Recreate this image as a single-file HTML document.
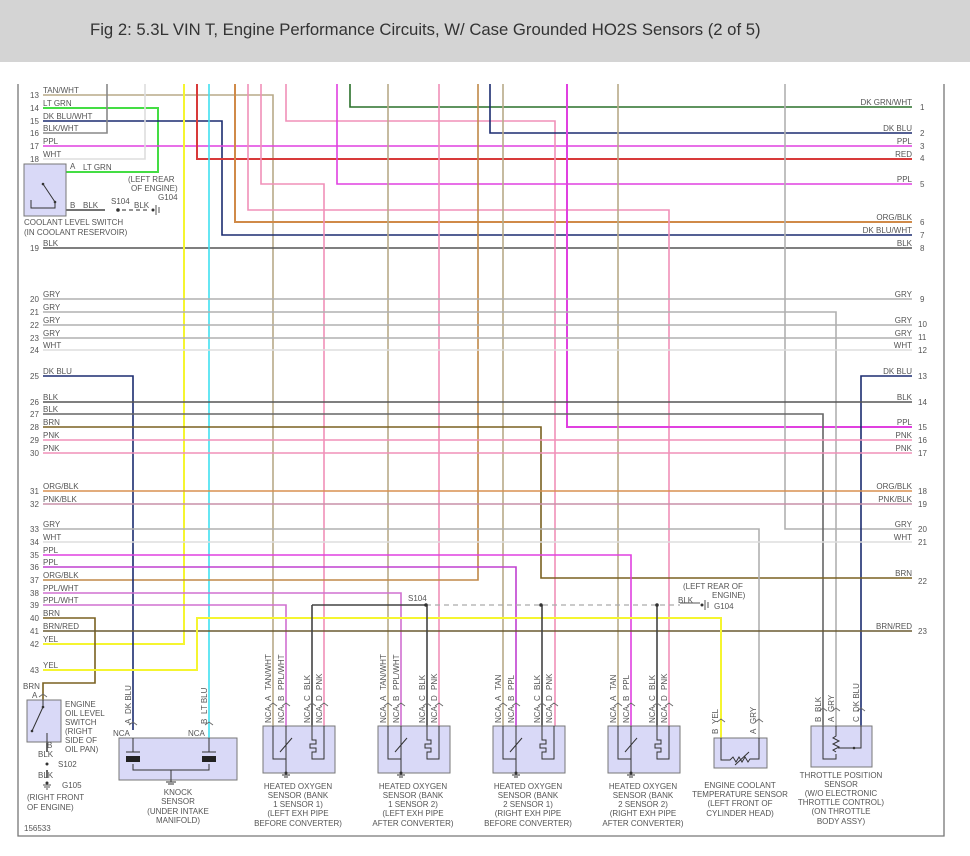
<!DOCTYPE html>
<html><head><meta charset="utf-8"><style>
html,body{margin:0;padding:0;background:#fff;width:970px;height:856px;overflow:hidden}
.hd{position:absolute;left:0;top:0;width:970px;height:62px;background:#d4d4d4}
.hd span{position:absolute;left:90px;top:20px;font:16.7px "Liberation Sans",sans-serif;color:#333}
svg{position:absolute;left:0;top:0}
text{font-family:"Liberation Sans",sans-serif;font-size:8px;fill:#555}
</style></head><body>
<div class="hd"><span>Fig 2: 5.3L VIN T, Engine Performance Circuits, W/ Case Grounded HO2S Sensors (2 of 5)</span></div>
<svg width="970" height="856" viewBox="0 0 970 856" fill="none">
<path d="M18 84V836H944V84" stroke="#777" stroke-width="1.3"/>
<g stroke-width="1.6" fill="none">
<path d="M43 95H273V726" stroke="#b8aa88"/>
<path d="M43 108H158V172H66" stroke="#44dd44" stroke-width="2"/>
<path d="M43 121H222V235H912" stroke="#1c2c70"/>
<path d="M43 133H107V84" stroke="#888"/>
<path d="M43 146H912" stroke="#e040e0"/>
<path d="M43 159H145V84" stroke="#ddd"/>
<path d="M43 248H912" stroke="#555"/>
<path d="M197 84V159H912" stroke="#d83a3a" stroke-width="2"/>
<path d="M184 84V644H43" stroke="#f5f530" stroke-width="2"/>
<path d="M209 84V738" stroke="#40e0f0"/>
<path d="M235 84V222H912" stroke="#d08a48" stroke-width="2"/>
<path d="M248 84V210H669V726" stroke="#f090b8"/>
<path d="M261 84V184H324V726" stroke="#f090b8"/>
<path d="M286 84V121H555V726" stroke="#f090b8"/>
<path d="M337 84V184H912" stroke="#e040e0"/>
<path d="M350 84V107H912" stroke="#2a702a"/>
<path d="M388 84V726" stroke="#b8aa88"/>
<path d="M439 84V726" stroke="#f090b8"/>
<path d="M478 84V580H43" stroke="#c08848"/>
<path d="M490 84V133H912" stroke="#1c2c70"/>
<path d="M503 84V726" stroke="#b8aa88"/>
<path d="M567 84V427H912" stroke="#e040e0" stroke-width="2"/>
<path d="M618 84V726" stroke="#b8aa88"/>
<path d="M785 84V529H912" stroke="#b0b0b0"/>
<path d="M43 299H912" stroke="#b0b0b0"/>
<path d="M43 312H836V726" stroke="#b0b0b0"/>
<path d="M43 325H912M43 338H912" stroke="#b0b0b0"/>
<path d="M43 350H912" stroke="#ddd"/>
<path d="M43 376H133V730" stroke="#1c2c70"/>
<path d="M912 376H861V726" stroke="#1c2c70"/>
<path d="M43 402H912" stroke="#555"/>
<path d="M43 414H823V726" stroke="#666"/>
<path d="M43 427H541V578H912" stroke="#7a6020"/>
<path d="M43 440H912M43 453H912" stroke="#f090b8"/>
<path d="M43 491H912" stroke="#d89050"/>
<path d="M43 504H912" stroke="#c890a8"/>
<path d="M43 529H759V738" stroke="#b0b0b0"/>
<path d="M43 542H912" stroke="#ddd"/>
<path d="M43 555H631V726" stroke="#e040e0"/>
<path d="M43 567H516V726" stroke="#c040d0"/>
<path d="M43 593H401V726" stroke="#d070d0"/>
<path d="M43 605H286V726" stroke="#d070d0"/>
<path d="M43 618H95V683H43V700" stroke="#7a6020"/>
<path d="M43 631H912" stroke="#6a5a30"/>
<path d="M43 670H197V618H721V738" stroke="#f5f530" stroke-width="2"/>
<path d="M312 605H426M312 605V726M427 605V726M542 605V726M657 605V726" stroke="#444"/>
<path d="M66 210H105" stroke="#444"/>
<path d="M47 742V752M47 770V778" stroke="#444"/>
</g>
<path d="M426 605H680" stroke="#aaa" stroke-width="1.2" stroke-dasharray="5,4"/>
<path d="M122 210H150" stroke="#555" stroke-width="1.2" stroke-dasharray="4,3"/>
<path d="M680 603H700" stroke="#555"/>
<g fill="#333"><circle cx="426" cy="605" r="1.8"/><circle cx="541" cy="605" r="1.8"/><circle cx="657" cy="605" r="1.8"/><circle cx="118" cy="210" r="1.8"/><circle cx="153" cy="210" r="1.5"/><circle cx="702" cy="605" r="1.5"/><circle cx="47" cy="764" r="1.5"/><circle cx="47" cy="783" r="1.5"/></g>
<path d="M156 205v10M159 207v6M705 600v10M708 602v6M43 785h8M44 787h6M46 789h2" stroke="#555"/>
<!-- chevrons -->
<g stroke="#666" stroke-width="0.9">
<path d="M269 706l4-3l4 3M282 706l4-3l4 3M308 706l4-3l4 3M320 706l4-3l4 3"/>
<path d="M384 706l4-3l4 3M397 706l4-3l4 3M423 706l4-3l4 3M435 706l4-3l4 3"/>
<path d="M499 706l4-3l4 3M512 706l4-3l4 3M538 706l4-3l4 3M550 706l4-3l4 3"/>
<path d="M614 706l4-3l4 3M627 706l4-3l4 3M653 706l4-3l4 3M665 706l4-3l4 3"/>
<path d="M129 725l4-3l4 3M205 725l4-3l4 3M717 722l4-3l4 3M755 722l4-3l4 3M819 711l4-3l4 3M832 711l4-3l4 3M857 711l4-3l4 3M39 697l4-3l4 3"/>
</g>

<g>
<text x="30" y="98">13</text><text x="43" y="93">TAN/WHT</text>
<text x="30" y="111">14</text><text x="43" y="106">LT GRN</text>
<text x="30" y="124">15</text><text x="43" y="119">DK BLU/WHT</text>
<text x="30" y="136">16</text><text x="43" y="131">BLK/WHT</text>
<text x="30" y="149">17</text><text x="43" y="144">PPL</text>
<text x="30" y="162">18</text><text x="43" y="157">WHT</text>
<text x="30" y="251">19</text><text x="43" y="246">BLK</text>
<text x="30" y="302">20</text><text x="43" y="297">GRY</text>
<text x="30" y="315">21</text><text x="43" y="310">GRY</text>
<text x="30" y="328">22</text><text x="43" y="323">GRY</text>
<text x="30" y="341">23</text><text x="43" y="336">GRY</text>
<text x="30" y="353">24</text><text x="43" y="348">WHT</text>
<text x="30" y="379">25</text><text x="43" y="374">DK BLU</text>
<text x="30" y="405">26</text><text x="43" y="400">BLK</text>
<text x="30" y="417">27</text><text x="43" y="412">BLK</text>
<text x="30" y="430">28</text><text x="43" y="425">BRN</text>
<text x="30" y="443">29</text><text x="43" y="438">PNK</text>
<text x="30" y="456">30</text><text x="43" y="451">PNK</text>
<text x="30" y="494">31</text><text x="43" y="489">ORG/BLK</text>
<text x="30" y="507">32</text><text x="43" y="502">PNK/BLK</text>
<text x="30" y="532">33</text><text x="43" y="527">GRY</text>
<text x="30" y="545">34</text><text x="43" y="540">WHT</text>
<text x="30" y="558">35</text><text x="43" y="553">PPL</text>
<text x="30" y="570">36</text><text x="43" y="565">PPL</text>
<text x="30" y="583">37</text><text x="43" y="578">ORG/BLK</text>
<text x="30" y="596">38</text><text x="43" y="591">PPL/WHT</text>
<text x="30" y="608">39</text><text x="43" y="603">PPL/WHT</text>
<text x="30" y="621">40</text><text x="43" y="616">BRN</text>
<text x="30" y="634">41</text><text x="43" y="629">BRN/RED</text>
<text x="30" y="647">42</text><text x="43" y="642">YEL</text>
<text x="30" y="673">43</text><text x="43" y="668">YEL</text>
</g>
<g text-anchor="end">
<text x="912" y="105">DK GRN/WHT</text><text x="912" y="131">DK BLU</text><text x="912" y="144">PPL</text><text x="912" y="157">RED</text><text x="912" y="182">PPL</text><text x="912" y="220">ORG/BLK</text><text x="912" y="233">DK BLU/WHT</text><text x="912" y="246">BLK</text>
<text x="912" y="297">GRY</text><text x="912" y="323">GRY</text><text x="912" y="336">GRY</text><text x="912" y="348">WHT</text><text x="912" y="374">DK BLU</text><text x="912" y="400">BLK</text><text x="912" y="425">PPL</text><text x="912" y="438">PNK</text><text x="912" y="451">PNK</text><text x="912" y="489">ORG/BLK</text><text x="912" y="502">PNK/BLK</text><text x="912" y="527">GRY</text><text x="912" y="540">WHT</text><text x="912" y="576">BRN</text><text x="912" y="629">BRN/RED</text>
</g>
<g>
<text x="920" y="110">1</text><text x="920" y="136">2</text><text x="920" y="149">3</text><text x="920" y="161">4</text><text x="920" y="187">5</text><text x="920" y="225">6</text><text x="920" y="238">7</text><text x="920" y="251">8</text>
<text x="920" y="302">9</text><text x="918" y="327">10</text><text x="918" y="340">11</text><text x="918" y="353">12</text><text x="918" y="379">13</text><text x="918" y="405">14</text><text x="918" y="430">15</text><text x="918" y="443">16</text><text x="918" y="456">17</text><text x="918" y="494">18</text><text x="918" y="507">19</text><text x="918" y="532">20</text><text x="918" y="545">21</text><text x="918" y="584">22</text><text x="918" y="634">23</text>
</g>

<rect x="24" y="164" width="42" height="52" fill="#d9d9f7" stroke="#777"/>
<path d="M43 184L55 202M31 200V208H55V202" stroke="#333"/>
<circle cx="43" cy="184" r="1.3" fill="#333"/><circle cx="55" cy="202" r="1.3" fill="#333"/>
<text x="70" y="169">A</text><text x="83" y="170">LT GRN</text>
<text x="70" y="208">B</text><text x="83" y="208">BLK</text><text x="111" y="204">S104</text><text x="134" y="208">BLK</text>
<text x="128" y="182">(LEFT REAR</text><text x="131" y="191">OF ENGINE)</text><text x="158" y="200">G104</text>
<text x="24" y="225">COOLANT LEVEL SWITCH</text><text x="24" y="235">(IN COOLANT RESERVOIR)</text>
<text x="408" y="601">S104</text>
<text x="683" y="589">(LEFT REAR OF</text><text x="712" y="598">ENGINE)</text><text x="678" y="603">BLK</text><text x="714" y="609">G104</text>

<rect x="27" y="700" width="34" height="42" fill="#d9d9f7" stroke="#777"/>
<path d="M43 700V707M43 707L32 731M47 742V733" stroke="#333"/>
<circle cx="43" cy="707" r="1.3" fill="#333"/><circle cx="32" cy="731" r="1.3" fill="#333"/>
<text x="23" y="689">BRN</text><text x="32" y="698">A</text>
<g><text x="65" y="707">ENGINE</text><text x="65" y="716">OIL LEVEL</text><text x="65" y="725">SWITCH</text><text x="65" y="734">(RIGHT</text><text x="65" y="743">SIDE OF</text><text x="65" y="752">OIL PAN)</text></g>
<text x="47" y="748">B</text><text x="38" y="757">BLK</text><text x="58" y="767">S102</text><text x="38" y="778">BLK</text><text x="62" y="788">G105</text>
<text x="27" y="800">(RIGHT FRONT</text><text x="27" y="810">OF ENGINE)</text>
<text x="24" y="831">156533</text>

<rect x="119" y="738" width="118" height="42" fill="#d9d9f7" stroke="#777"/>
<path d="M133 738V752M209 738V752M126 752H140M202 752H216M133 764V770H209V764M171 770V782M166 782h10M168 784h6" stroke="#333"/>
<rect x="126" y="756" width="14" height="6" fill="#222"/><rect x="202" y="756" width="14" height="6" fill="#222"/>
<text x="113" y="736">NCA</text><text x="188" y="736">NCA</text>
<text transform="translate(131,724) rotate(-90)">A</text><text transform="translate(131,714) rotate(-90)">DK BLU</text>
<text transform="translate(207,724) rotate(-90)">B</text><text transform="translate(207,714) rotate(-90)">LT BLU</text>
<g text-anchor="middle"><text x="178" y="795">KNOCK</text><text x="178" y="804">SENSOR</text><text x="178" y="814">(UNDER INTAKE</text><text x="178" y="823">MANIFOLD)</text></g>

<g id="s1">
<rect x="263" y="726" width="72" height="47" fill="#d9d9f7" stroke="#777"/>
<path d="M273 726V759H286M286 726V773M280 752L292 738M312 726V740h4v4h-6v4h6v4h-4v7h12V726M282 775h8M284 777h4" stroke="#333" stroke-width="1"/>
<circle cx="286" cy="773" r="1.5" fill="#333"/>
</g>
<use href="#s1" x="115"/><use href="#s1" x="230"/><use href="#s1" x="345"/>
<g>
<text transform="translate(271,723) rotate(-90)">NCA</text><text transform="translate(284,723) rotate(-90)">NCA</text><text transform="translate(310,723) rotate(-90)">NCA</text><text transform="translate(322,723) rotate(-90)">NCA</text>
<text transform="translate(271,701) rotate(-90)">A</text><text transform="translate(284,701) rotate(-90)">B</text><text transform="translate(310,701) rotate(-90)">C</text><text transform="translate(322,701) rotate(-90)">D</text>
<text transform="translate(271,690) rotate(-90)">TAN/WHT</text><text transform="translate(284,690) rotate(-90)">PPL/WHT</text><text transform="translate(310,690) rotate(-90)">BLK</text><text transform="translate(322,690) rotate(-90)">PNK</text>
<text transform="translate(386,723) rotate(-90)">NCA</text><text transform="translate(399,723) rotate(-90)">NCA</text><text transform="translate(425,723) rotate(-90)">NCA</text><text transform="translate(437,723) rotate(-90)">NCA</text>
<text transform="translate(386,701) rotate(-90)">A</text><text transform="translate(399,701) rotate(-90)">B</text><text transform="translate(425,701) rotate(-90)">C</text><text transform="translate(437,701) rotate(-90)">D</text>
<text transform="translate(386,690) rotate(-90)">TAN/WHT</text><text transform="translate(399,690) rotate(-90)">PPL/WHT</text><text transform="translate(425,690) rotate(-90)">BLK</text><text transform="translate(437,690) rotate(-90)">PNK</text>
<text transform="translate(501,723) rotate(-90)">NCA</text><text transform="translate(514,723) rotate(-90)">NCA</text><text transform="translate(540,723) rotate(-90)">NCA</text><text transform="translate(552,723) rotate(-90)">NCA</text>
<text transform="translate(501,701) rotate(-90)">A</text><text transform="translate(514,701) rotate(-90)">B</text><text transform="translate(540,701) rotate(-90)">C</text><text transform="translate(552,701) rotate(-90)">D</text>
<text transform="translate(501,690) rotate(-90)">TAN</text><text transform="translate(514,690) rotate(-90)">PPL</text><text transform="translate(540,690) rotate(-90)">BLK</text><text transform="translate(552,690) rotate(-90)">PNK</text>
<text transform="translate(616,723) rotate(-90)">NCA</text><text transform="translate(629,723) rotate(-90)">NCA</text><text transform="translate(655,723) rotate(-90)">NCA</text><text transform="translate(667,723) rotate(-90)">NCA</text>
<text transform="translate(616,701) rotate(-90)">A</text><text transform="translate(629,701) rotate(-90)">B</text><text transform="translate(655,701) rotate(-90)">C</text><text transform="translate(667,701) rotate(-90)">D</text>
<text transform="translate(616,690) rotate(-90)">TAN</text><text transform="translate(629,690) rotate(-90)">PPL</text><text transform="translate(655,690) rotate(-90)">BLK</text><text transform="translate(667,690) rotate(-90)">PNK</text>
</g>
<g text-anchor="middle">
<text x="298" y="789">HEATED OXYGEN</text><text x="298" y="798">SENSOR (BANK</text><text x="298" y="807">1 SENSOR 1)</text><text x="298" y="816">(LEFT EXH PIPE</text><text x="298" y="826">BEFORE CONVERTER)</text>
<text x="413" y="789">HEATED OXYGEN</text><text x="413" y="798">SENSOR (BANK</text><text x="413" y="807">1 SENSOR 2)</text><text x="413" y="816">(LEFT EXH PIPE</text><text x="413" y="826">AFTER CONVERTER)</text>
<text x="528" y="789">HEATED OXYGEN</text><text x="528" y="798">SENSOR (BANK</text><text x="528" y="807">2 SENSOR 1)</text><text x="528" y="816">(RIGHT EXH PIPE</text><text x="528" y="826">BEFORE CONVERTER)</text>
<text x="643" y="789">HEATED OXYGEN</text><text x="643" y="798">SENSOR (BANK</text><text x="643" y="807">2 SENSOR 2)</text><text x="643" y="816">(RIGHT EXH PIPE</text><text x="643" y="826">AFTER CONVERTER)</text>
</g>

<rect x="714" y="738" width="53" height="30" fill="#d9d9f7" stroke="#777"/>
<path d="M721 738V760H730l3 -3l3 5l3-5l3 5l3-5l3 5l2-3H759V738M735 765L749 752" stroke="#333" stroke-width="1"/>
<text transform="translate(718,734) rotate(-90)">B</text><text transform="translate(718,724) rotate(-90)">YEL</text>
<text transform="translate(756,734) rotate(-90)">A</text><text transform="translate(756,724) rotate(-90)">GRY</text>
<g text-anchor="middle"><text x="740" y="788">ENGINE COOLANT</text><text x="740" y="797">TEMPERATURE SENSOR</text><text x="740" y="806">(LEFT FRONT OF</text><text x="740" y="816">CYLINDER HEAD)</text></g>

<rect x="811" y="726" width="61" height="41" fill="#d9d9f7" stroke="#777"/>
<path d="M823 726V759H836V754M836 726V736l-3 2l6 3l-6 3l6 3l-6 3l3 2M838 748H854M861 726V748H854" stroke="#333" stroke-width="1"/>
<circle cx="854" cy="748" r="1.3" fill="#333"/>
<text transform="translate(821,722) rotate(-90)">B</text><text transform="translate(821,712) rotate(-90)">BLK</text>
<text transform="translate(834,722) rotate(-90)">A</text><text transform="translate(834,712) rotate(-90)">GRY</text>
<text transform="translate(859,722) rotate(-90)">C</text><text transform="translate(859,712) rotate(-90)">DK BLU</text>
<g text-anchor="middle"><text x="841" y="778">THROTTLE POSITION</text><text x="841" y="787">SENSOR</text><text x="841" y="796">(W/O ELECTRONIC</text><text x="841" y="805">THROTTLE CONTROL)</text><text x="841" y="814">(ON THROTTLE</text><text x="841" y="824">BODY ASSY)</text></g>
</svg>
</body></html>
